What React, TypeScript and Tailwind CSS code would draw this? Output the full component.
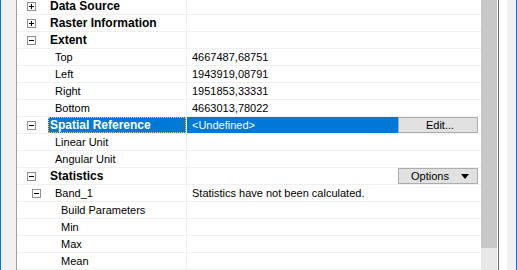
import React from "react";

type Row = {
  label: string;
  value?: string;
  indent: number;
  box?: "plus" | "minus";
  bold?: boolean;
  selected?: boolean;
  button?: "edit" | "options";
};

const rows: Row[] = [
  { label: "Data Source", indent: 0, box: "plus", bold: true },
  { label: "Raster Information", indent: 0, box: "plus", bold: true },
  { label: "Extent", indent: 0, box: "minus", bold: true },
  { label: "Top", value: "4667487,68751", indent: 1 },
  { label: "Left", value: "1943919,08791", indent: 1 },
  { label: "Right", value: "1951853,33331", indent: 1 },
  { label: "Bottom", value: "4663013,78022", indent: 1 },
  { label: "Spatial Reference", value: "<Undefined>", indent: 0, box: "minus", bold: true, selected: true, button: "edit" },
  { label: "Linear Unit", indent: 1 },
  { label: "Angular Unit", indent: 1 },
  { label: "Statistics", indent: 0, box: "minus", bold: true, button: "options" },
  { label: "Band_1", value: "Statistics have not been calculated.", indent: 1, box: "minus" },
  { label: "Build Parameters", indent: 2 },
  { label: "Min", indent: 2 },
  { label: "Max", indent: 2 },
  { label: "Mean", indent: 2 },
];

const Box = ({ kind }: { kind: "plus" | "minus" }) => (
  <svg width="9" height="9" viewBox="0 0 9 9" className="shrink-0">
    <rect x="0.5" y="0.5" width="8" height="8" fill="#fff" stroke="#8f8f8f" />
    <line x1="2" y1="4.5" x2="7" y2="4.5" stroke="#000" />
    {kind === "plus" && <line x1="4.5" y1="2" x2="4.5" y2="7" stroke="#000" />}
  </svg>
);

const PropRow = ({ row }: { row: Row }) => {
  const boxLeft = row.indent === 0 ? "pl-[10px]" : "pl-[15px]";
  const textLeft =
    row.indent === 0 ? "pl-[33px]" : row.indent === 1 ? "pl-[38px]" : "pl-[44px]";
  return (
    <div className="flex h-[17px] shrink-0 border-b border-[#f0f0f0] text-[11px] leading-[16px] text-black">
      <div className="relative flex w-[169px] shrink-0 items-center">
        {row.box && (
          <div className={`absolute inset-y-0 left-0 flex items-center ${boxLeft}`}>
            <Box kind={row.box} />
          </div>
        )}
        {row.selected ? (
          <div className="ml-[31px] flex h-full flex-1 items-center bg-[#0078d7] pl-[2px] text-[12px] font-bold text-white outline-1 outline-dotted outline-offset-[-1px] outline-[#f5c060]">
            {row.label}
          </div>
        ) : (
          <div
            className={`${textLeft} ${row.bold ? "text-[12px] font-bold" : ""} whitespace-nowrap`}
          >
            {row.label}
          </div>
        )}
      </div>
      <div className="flex flex-1 border-l border-[#f0f0f0]">
        <div
          className={`flex flex-1 items-center whitespace-nowrap pl-[5px] ${
            row.selected ? "bg-[#0078d7] text-white" : ""
          }`}
        >
          {row.value}
        </div>
        {row.button && (
          <div className="mr-[3px] flex w-[80px] shrink-0 items-center justify-center gap-[12px] border border-[#adadad] bg-[#e1e1e1] pl-[4px]">
            <span>{row.button === "edit" ? "Edit..." : "Options"}</span>
            {row.button === "options" && (
              <svg width="8" height="5" viewBox="0 0 8 5">
                <path d="M0 0h8L4 5z" fill="#000" />
              </svg>
            )}
          </div>
        )}
      </div>
    </div>
  );
};

export default function App() {
  return (
    <div
      className="flex h-[270px] w-[517px] overflow-hidden bg-white"
      style={{ fontFamily: '"Liberation Sans", Arial, sans-serif' }}
    >
      <div className="w-[1px] shrink-0 bg-[#0078d7]" />
      <div className="w-[15px] shrink-0 bg-[#f0f0f0]" />
      <div className="w-[1px] shrink-0 bg-[#a0a0a0]" />
      <div className="flex w-[464px] shrink-0 flex-col">
        <div className="-mt-[2px] flex flex-col">
          {rows.map((r) => (
            <PropRow key={r.label} row={r} />
          ))}
        </div>
      </div>
      <div className="flex w-[16px] shrink-0 flex-col bg-[#e8e8e8]">
        <div className="h-[248px] w-full bg-[#c8c8c8]" />
      </div>
      <div className="w-[1px] shrink-0 bg-white" />
      <div className="w-[1px] shrink-0 bg-[#6e6e6e]" />
      <div className="w-[8px] shrink-0 bg-white" />
      <div className="w-[9px] shrink-0 bg-[#f0f0f0]" />
      <div className="w-[1px] shrink-0 bg-[#0078d7]" />
    </div>
  );
}
